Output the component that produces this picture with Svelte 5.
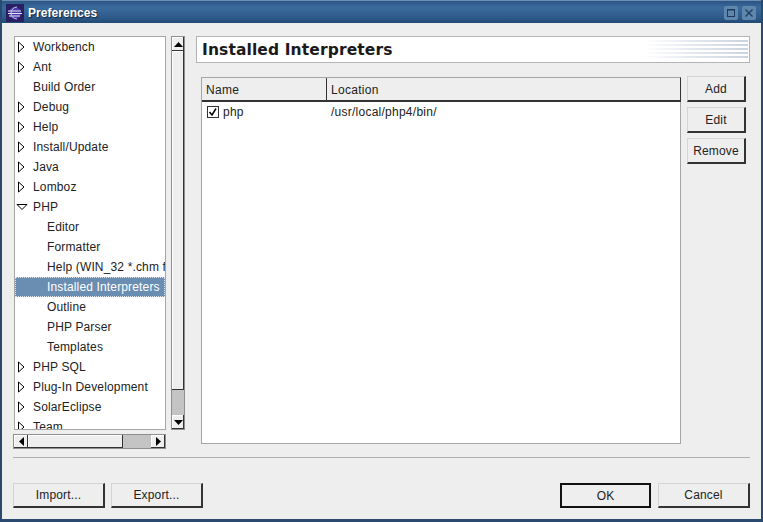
<script>
  const tree = [
    { t: 'Workbench', a: 'r' }, { t: 'Ant', a: 'r' }, { t: 'Build Order' }, { t: 'Debug', a: 'r' },
    { t: 'Help', a: 'r' }, { t: 'Install/Update', a: 'r' }, { t: 'Java', a: 'r' }, { t: 'Lomboz', a: 'r' },
    { t: 'PHP', a: 'd' }, { t: 'Editor', c: 1 }, { t: 'Formatter', c: 1 }, { t: 'Help (WIN_32 *.chm file)', c: 1 },
    { t: 'Installed Interpreters', c: 1, s: 1 }, { t: 'Outline', c: 1 }, { t: 'PHP Parser', c: 1 }, { t: 'Templates', c: 1 },
    { t: 'PHP SQL', a: 'r' }, { t: 'Plug-In Development', a: 'r' }, { t: 'SolarEclipse', a: 'r' }, { t: 'Team', a: 'r' }
  ];
</script>

<div class="win">
  <header class="title">
    <svg class="logo" width="18" height="18" viewBox="0 0 18 18">
      <rect width="18" height="18" fill="#2a1f63"/>
      <circle cx="9" cy="9" r="6" fill="#4a3aa8"/>
      <path d="M2 7h13M2 9.5h14M3 12h11" stroke="#e8e6f5" stroke-width="1"/>
      <path d="M11 3a6 6 0 0 0 0 12" fill="none" stroke="#c9c4ee" stroke-width="1"/>
    </svg>
    <span class="title-text">Preferences</span>
    <span class="wbtn"><svg width="10" height="10" viewBox="0 0 10 10"><rect x="1.5" y="1.5" width="7" height="7" fill="none" stroke="#1c3a5c" stroke-width="1"/><path d="M1 2h8" stroke="#1c3a5c"/></svg></span>
    <span class="wbtn"><svg width="10" height="10" viewBox="0 0 10 10"><path d="M1.5 1.5l7 7M8.5 1.5l-7 7" stroke="#1c3a5c" stroke-width="1.2"/></svg></span>
  </header>

  <div class="content">
    <div class="main">
      <aside class="left">
        <div class="tree-row">
          <div class="tree">
            {#each tree as n}
              <div class="node" class:child={n.c}>
                {#if n.a === 'r'}
                  <svg class="arrow" width="8" height="12" viewBox="0 0 8 12"><path d="M1.5 1l5.5 5-5.5 5z" fill="#fff" stroke="#000"/></svg>
                {:else if n.a === 'd'}
                  <svg class="arrow down" width="12" height="8" viewBox="0 0 12 8"><path d="M1 1.5h10l-5 5z" fill="#fff" stroke="#000"/></svg>
                {/if}
                <span class="label" class:sel={n.s}>{n.t}</span>
              </div>
            {/each}
          </div>
          <div class="vbar">
            <span class="sb-btn"><svg width="9" height="5" viewBox="0 0 9 5"><path d="M4.5 0L9 5H0z"/></svg></span>
            <span class="thumb-v"></span>
            <span class="sb-btn"><svg width="9" height="5" viewBox="0 0 9 5"><path d="M0 0h9L4.5 5z"/></svg></span>
          </div>
        </div>
        <div class="hbar">
          <span class="sb-btn"><svg width="5" height="9" viewBox="0 0 5 9"><path d="M5 0v9L0 4.5z"/></svg></span>
          <span class="thumb-h"></span>
          <span class="sb-btn"><svg width="5" height="9" viewBox="0 0 5 9"><path d="M0 0l5 4.5L0 9z"/></svg></span>
        </div>
      </aside>

      <section class="right">
        <div class="banner">
          <h1>Installed Interpreters</h1>
          <div class="stripes"></div>
        </div>
        <div class="panel">
          <div class="table">
            <div class="thead">
              <div class="th name">Name</div>
              <div class="th">Location</div>
            </div>
            <div class="tr">
              <div class="td name">
                <svg width="12" height="12" viewBox="0 0 12 12"><rect x=".5" y=".5" width="11" height="11" fill="#fff" stroke="#333"/><path d="M2.5 6l2.5 3 4-6.5" fill="none" stroke="#000" stroke-width="1.5"/></svg>
                <span>php</span>
              </div>
              <div class="td">/usr/local/php4/bin/</div>
            </div>
          </div>
          <div class="side">
            <button>Add</button>
            <button>Edit</button>
            <button>Remove</button>
          </div>
        </div>
      </section>
    </div>

    <hr />

    <footer>
      <div class="group">
        <button class="wide imp">Import...</button>
        <button class="wide exp">Export...</button>
      </div>
      <div class="group">
        <button class="wide ok">OK</button>
        <button class="wide cancel">Cancel</button>
      </div>
    </footer>
  </div>
</div>

<style>
  :global(body) { margin: 0; background: #eee; }
  .win {
    width: 763px; height: 522px; box-sizing: border-box;
    background: #eeeeee; display: flex; flex-direction: column;
    border: 2px solid #2a4a70; border-top: 0; border-bottom-width: 3px;
    font: 12px "Liberation Sans", Arial, sans-serif; color: #222; letter-spacing: .15px;
    overflow: hidden;
  }
  .title {
    height: 23px; flex: none; display: flex; align-items: center; gap: 2px;
    margin: 0 -2px; padding: 1px 7px 0 6px;
    background: linear-gradient(#2c5585, #3a6a9c 30%, #305c8c 70%, #234a75);
    border-top: 1px solid #6d8fb3; box-sizing: border-box;
  }
  .logo { flex: none; }
  .title-text {
    flex: 1; margin-left: 2px; color: #fff; font-weight: bold; font-size: 12px;
    letter-spacing: .05px; text-shadow: 1px 1px 1px #12263e;
  }
  .wbtn {
    width: 14px; height: 14px; display: flex; align-items: center; justify-content: center;
    background: #5f86ad; border-radius: 2px; margin-left: 2px;
  }
  .content { flex: 1; display: flex; flex-direction: column; padding: 13px 11px 0; min-height: 0; }
  .main { display: flex; height: 414px; flex: none; gap: 11px; }
  .left { width: 172px; flex: none; display: flex; flex-direction: column; gap: 4px; }
  .tree-row { display: flex; height: 394px; gap: 5px; }
  .tree {
    width: 153px; margin-left: 1px; box-sizing: border-box; background: #fff;
    border: 1px solid #a6a6a6; overflow: hidden;
  }
  .node {
    position: relative; height: 20px; display: flex; align-items: center;
    padding-left: 17px; white-space: nowrap;
  }
  .node.child { padding-left: 31px; }
  .arrow { position: absolute; left: 2px; top: 4px; }
  .arrow.down { left: 1px; top: 6px; }
  .label { padding: 0 1px; }
  .sel {
    position: relative; background: #6a8db2; color: #fff; width: 100%;
    margin-left: -31px; padding-left: 32px; height: 20px; line-height: 20px;
    box-sizing: content-box; outline: 1px dotted #dfe6ee; outline-offset: -1px;
  }
  .vbar {
    width: 14px; flex: none; display: flex; flex-direction: column;
    border: 1px solid #8f8f8f; box-sizing: border-box; background: #c4c4c4;
  }
  .sb-btn {
    flex: none; height: 14px; display: flex; align-items: center; justify-content: center;
    background: #eeeeee; box-shadow: inset -1px -1px 0 #333, inset 1px 1px 0 #fff;
  }
  .thumb-v { height: 339px; flex: none; background: #eeeeee; box-shadow: inset -1px -1px 0 #333, inset 1px 1px 0 #fff; }
  .vbar .thumb-v + .sb-btn { margin-top: auto; }
  .hbar {
    height: 15px; width: 153px; display: flex; box-sizing: border-box;
    border: 1px solid #8f8f8f; background: #c4c4c4;
  }
  .hbar .sb-btn { width: 14px; height: 13px; }
  .thumb-h { width: 95px; background: #eeeeee; box-shadow: inset -1px -1px 0 #333, inset 1px 1px 0 #fff; }
  .hbar .thumb-h + .sb-btn { margin-left: auto; }

  .right { flex: 1; display: flex; flex-direction: column; min-width: 0; }
  .banner {
    height: 27px; box-sizing: border-box; background: #fff; border: 1px solid #b4b4b4;
    display: flex; align-items: center; justify-content: space-between;
    padding-left: 5px; flex: none;
  }
  h1 {
    margin: 0; font: 600 15.5px "DejaVu Sans", sans-serif; letter-spacing: .12px; color: #1a1a1a;
  }
  .stripes {
    width: 104px; height: 18px; margin: 0 1px 2px 0;
    background: repeating-linear-gradient(#cbd3e0 0 2px, #fff 2px 4px);
    -webkit-mask-image: linear-gradient(90deg, transparent, rgba(0,0,0,.5) 45%, #000);
    mask-image: linear-gradient(90deg, transparent, rgba(0,0,0,.5) 45%, #000);
  }
  .panel { display: flex; margin-top: 13px; padding-left: 5px; gap: 6px; }
  .table {
    width: 480px; height: 367px; margin-top: 1px; box-sizing: border-box; background: #fff;
    border: 1px solid #a6a6a6; border-top: 0;
  }
  .thead {
    display: flex; height: 25px; background: #eeeeee; box-sizing: border-box;
    border-top: 1px solid #a6a6a6; border-right: 1px solid #333; border-bottom: 2px solid #333;
    margin-right: -1px;
  }
  .th { padding: 4px 0 0 4px; flex: 1; line-height: 16px; letter-spacing: .3px; }
  .th.name, .td.name { width: 125px; flex: none; box-sizing: border-box; }
  .th.name { border-right: 1px solid #333; }
  .tr { display: flex; height: 20px; align-items: center; }
  .td { padding-left: 4px; letter-spacing: .25px; }
  .td.name { display: flex; align-items: center; gap: 4px; padding-left: 5px; }
  .side { display: flex; flex-direction: column; gap: 5px; }
  button {
    font: inherit; letter-spacing: inherit; color: #222; padding: 0; margin: 0;
    background: #eeeeee; border: 1px solid; border-color: #d4d4d4 #333 #333 #d4d4d4;
    border-bottom-width: 2px; border-right-width: 2px;
  }
  .side button { width: 59px; height: 26px; }
  hr { border: 0; height: 1px; background: #b0b0b0; margin: 7px 0 0; width: 737px; flex: none; }
  footer { display: flex; justify-content: space-between; margin-top: 25px; }
  .group { display: flex; gap: 6px; }
  .group + .group { gap: 7px; }
  .wide { height: 25px; }
  .imp { width: 92px; }
  .exp { width: 92px; }
  .ok { width: 91px; border: 2px solid #111; }
  .cancel { width: 92px; }
</style>
